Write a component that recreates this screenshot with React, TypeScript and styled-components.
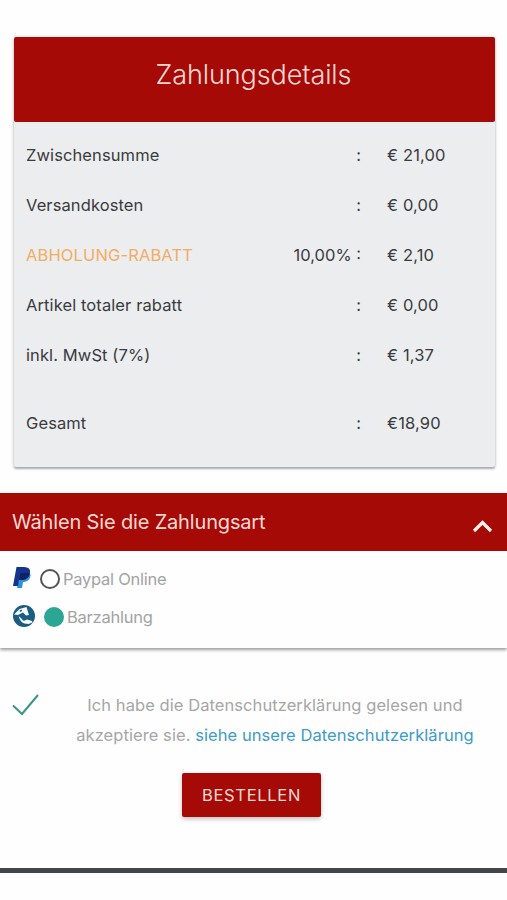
import React from "react";
import styled, { createGlobalStyle } from "styled-components";

const GlobalStyle = createGlobalStyle`
  * { box-sizing: border-box; }
  body { margin: 0; background: #fefefe; }
`;

const Page = styled.main`
  height: 900px;
  padding-top: 37px;
  background: #fefefe;
  color: #3a3b3d;
  font: 400 16.5px/24px Inter, "Liberation Sans", sans-serif;
  overflow: hidden;
`;

const SummaryCard = styled.section`
  width: 481px;
  height: 430px;
  margin-left: 13.5px;
  background: #ebedef;
  border-radius: 2px;
  box-shadow: 0 2px 2px rgba(40, 40, 55, 0.34), 0 0 4px rgba(0, 0, 0, 0.15);
`;

const SummaryTitle = styled.h1`
  height: 85px;
  margin: 0;
  padding: 20px 1px 0 0;
  background: #a50a07;
  border-radius: 2px;
  color: #fbd9d2;
  font-size: 27px;
  line-height: 36px;
  font-weight: 300;
  letter-spacing: -0.1px;
  text-align: center;
`;

const Rows = styled.div`
  padding: 8px 12px 0 12.5px;
`;

const Row = styled.div<{ $total?: boolean }>`
  display: grid;
  grid-template-columns: 200px 135px 1fr;
  align-items: center;
  height: 50px;
  margin-top: ${(p) => (p.$total ? "18px" : "0")};
`;

const Label = styled.span<{ $accent?: boolean }>`
  color: ${(p) => (p.$accent ? "#f3ac62" : "inherit")};
  letter-spacing: ${(p) => (p.$accent ? "0.13px" : "0.1px")};
`;

const Rate = styled.span`
  text-align: right;
  white-space: nowrap;
`;

const Amount = styled.span`
  padding-left: 26px;
  letter-spacing: 0.15px;
`;

const Payment = styled.section`
  height: 155px;
  margin-top: 26px;
  background: #fefefe;
  box-shadow: 0 2px 3px rgba(0, 0, 0, 0.38);
`;

const PaymentHeader = styled.header`
  display: flex;
  justify-content: space-between;
  height: 58px;
  padding: 17px 14px 0 12px;
  background: #a50a07;
  color: #fbd9d2;
  font-size: 20px;
  letter-spacing: -0.16px;
`;

const Chevron = styled.svg`
  width: 21px;
  height: 16px;
  margin-top: 8px;
`;

const Options = styled.div`
  padding: 9px 12px 0;
`;

const Option = styled.label`
  display: flex;
  align-items: center;
  height: 38px;
  color: #a3a3a3;
  letter-spacing: -0.25px;
`;

const OptionIcon = styled.svg<{ $wide?: boolean }>`
  flex: none;
  width: ${(p) => (p.$wide ? "24px" : "20px")};
  height: 24px;
  margin: 0 8px 3px 0;
`;

const Radio = styled.span<{ $checked?: boolean }>`
  flex: none;
  width: 20px;
  height: 20px;
  margin-right: 3px;
  border: 2px solid ${(p) => (p.$checked ? "#2ba594" : "#545454")};
  border-radius: 50%;
  background: ${(p) => (p.$checked ? "#2ba594" : "transparent")};
`;

const Consent = styled.div`
  display: flex;
  margin-top: 42px;
  padding-left: 12px;
`;

const Check = styled.svg`
  flex: none;
  width: 27px;
  height: 22px;
  margin-top: 4px;
`;

const ConsentText = styled.p`
  flex: none;
  width: 472px;
  margin: 0;
  color: #a6a6a6;
  line-height: 30px;
  letter-spacing: 0.07px;
  text-align: center;
`;

const PrivacyLink = styled.a`
  color: #3c9cc8;
`;

const OrderButton = styled.button`
  display: block;
  width: 139px;
  height: 44px;
  margin: 23px 0 0 182px;
  padding: 0;
  border: 0;
  border-radius: 2px;
  background: #a50a07;
  color: #fbd9d2;
  font: inherit;
  letter-spacing: 0.7px;
  box-shadow: 0 2px 4px rgba(0, 0, 0, 0.25);
`;

const BottomBar = styled.footer`
  height: 5px;
  margin-top: 51px;
  background: #444546;
`;

const items = [
  { label: "Zwischensumme", rate: ":", amount: "€ 21,00" },
  { label: "Versandkosten", rate: ":", amount: "€ 0,00" },
  { label: "ABHOLUNG-RABATT", rate: "10,00% :", amount: "€ 2,10", accent: true },
  { label: "Artikel totaler rabatt", rate: ":", amount: "€ 0,00" },
  { label: "inkl. MwSt (7%)", rate: ":", amount: "€ 1,37" },
  { label: "Gesamt", rate: ":", amount: "€18,90", total: true },
];

function PaypalIcon() {
  return (
    <OptionIcon viewBox="0 0 20 24">
      <path d="M15 5q5 2 3 7-2 4-7 4l-1 6H5l2-9z" fill="#2794d8" />
      <path d="M4.5 1H12q7 0 6 6-1 7-8 7H7l-1 6H1z" fill="#15358c" />
      <path d="M8.5 7H15q2.500 0 2.500 1-2 6-8 6H7z" fill="#122163" />
    </OptionIcon>
  );
}

function CashIcon() {
  return (
    <OptionIcon $wide viewBox="0 0 24 24">
      <circle cx="12" cy="12" r="11" fill="#1b5d80" />
      <path d="M2 10.500L7.500 5l7-2 1.500 5 1 3-3 .5-3-3-2 1-3 1.500z" fill="#f7fafb" />
      <path d="M7.500 6.500l2-1 .5 1.500-2 1z" fill="#1b5d80" />
      <path d="M6.500 12q3 2 4.500 4.500 2 .5 4-1l5 1.500.5 1.500-4 1.500-4-.5q-4-1-6-7.500z" fill="#f7fafb" />
    </OptionIcon>
  );
}

export default function App() {
  return (
    <>
      <GlobalStyle />
      <Page>
        <SummaryCard>
          <SummaryTitle>Zahlungsdetails</SummaryTitle>
          <Rows>
            {items.map((item) => (
              <Row key={item.label} $total={item.total}>
                <Label $accent={item.accent}>{item.label}</Label>
                <Rate>{item.rate}</Rate>
                <Amount>{item.amount}</Amount>
              </Row>
            ))}
          </Rows>
        </SummaryCard>
        <Payment>
          <PaymentHeader>
            Wählen Sie die Zahlungsart
            <Chevron viewBox="0 0 21 16" fill="none" stroke="#fff3ec" strokeWidth="3.2">
              <path d="M2 13l8.5-8.5L19 13" />
            </Chevron>
          </PaymentHeader>
          <Options>
            <Option>
              <PaypalIcon />
              <Radio />
              Paypal Online
            </Option>
            <Option>
              <CashIcon />
              <Radio $checked />
              Barzahlung
            </Option>
          </Options>
        </Payment>
        <Consent>
          <Check viewBox="0 0 27 22" fill="none" stroke="#38977f" strokeWidth="2">
            <path d="M1 11.5l9 8.5L26 1" />
          </Check>
          <ConsentText>
            Ich habe die Datenschutzerklärung gelesen und
            <br />
            akzeptiere sie. <PrivacyLink>siehe unsere Datenschutzerklärung</PrivacyLink>
          </ConsentText>
        </Consent>
        <OrderButton>BESTELLEN</OrderButton>
        <BottomBar />
      </Page>
    </>
  );
}
